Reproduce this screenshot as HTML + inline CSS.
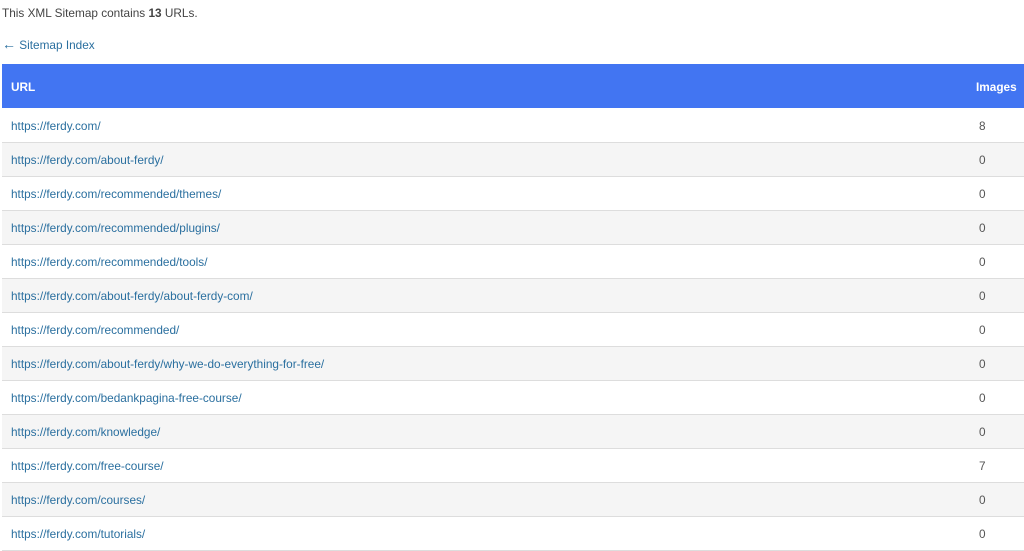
<!DOCTYPE html>
<html><head><style>
body{margin:0;background:#fff;font-family:"Liberation Sans",sans-serif;font-size:11.8px;color:#444;}
p{margin:0;position:absolute;left:2px;}
a{color:#2a6f9f;text-decoration:none;}
table{position:absolute;left:2px;top:64px;width:1030px;border-collapse:collapse;}
th{background:#4275f2;color:#fff;height:44px;text-align:left;padding:2px 0 0 9px;font-size:11.8px;box-sizing:border-box;}
th.i{text-align:left;width:56px;padding-left:0;}
td{height:34px;box-sizing:border-box;border-bottom:1px solid #ddd;padding:2px 0 0 9px;}
td.i{padding-left:3px;color:#555}
tr:nth-child(odd) td{background:#f5f5f5;}
</style></head><body>
<p style="top:6px">This XML Sitemap contains <b>13</b> URLs.</p>
<p style="top:36px"><a><span style="font-size:14px">←</span> Sitemap Index</a></p>
<table>
<tr><th>URL</th><th class="i">Images</th></tr>
<tr><td><a>https://ferdy.com/</a></td><td class="i">8</td></tr>
<tr><td><a>https://ferdy.com/about-ferdy/</a></td><td class="i">0</td></tr>
<tr><td><a>https://ferdy.com/recommended/themes/</a></td><td class="i">0</td></tr>
<tr><td><a>https://ferdy.com/recommended/plugins/</a></td><td class="i">0</td></tr>
<tr><td><a>https://ferdy.com/recommended/tools/</a></td><td class="i">0</td></tr>
<tr><td><a>https://ferdy.com/about-ferdy/about-ferdy-com/</a></td><td class="i">0</td></tr>
<tr><td><a>https://ferdy.com/recommended/</a></td><td class="i">0</td></tr>
<tr><td><a>https://ferdy.com/about-ferdy/why-we-do-everything-for-free/</a></td><td class="i">0</td></tr>
<tr><td><a>https://ferdy.com/bedankpagina-free-course/</a></td><td class="i">0</td></tr>
<tr><td><a>https://ferdy.com/knowledge/</a></td><td class="i">0</td></tr>
<tr><td><a>https://ferdy.com/free-course/</a></td><td class="i">7</td></tr>
<tr><td><a>https://ferdy.com/courses/</a></td><td class="i">0</td></tr>
<tr><td><a>https://ferdy.com/tutorials/</a></td><td class="i">0</td></tr>
</table>
</body></html>
